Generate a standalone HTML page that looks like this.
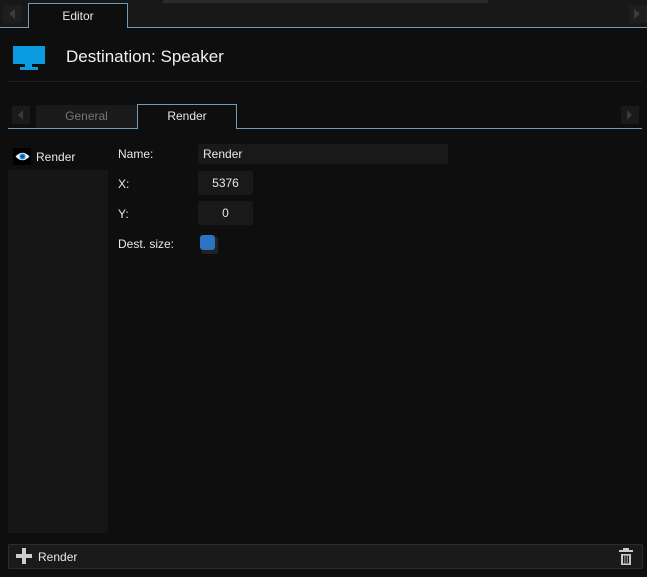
<!DOCTYPE html>
<html><head><style>
*{margin:0;padding:0;box-sizing:border-box}
body{width:647px;height:577px;background:#0e0e0e;font-family:"Liberation Sans",sans-serif;color:#e8e8e8;position:relative;overflow:hidden;font-size:12px}
.a{position:absolute}
</style></head><body>
<div class="a" style="left:0;top:0;width:647px;height:27px;background:#181818"></div>
<div class="a" style="left:163;top:0"></div>
<div class="a" style="left:163px;top:0;width:325px;height:3px;background:#2a2a2a"></div>
<div class="a" style="left:3px;top:5px;width:19px;height:18px;background:#1e1e1e"></div>
<div class="a" style="left:9px;top:9px;border-right:6px solid #3c3c3c;border-top:5px solid transparent;border-bottom:5px solid transparent"></div>
<div class="a" style="left:629px;top:5px;width:18px;height:18px;background:#1e1e1e"></div>
<div class="a" style="left:634px;top:9px;border-left:6px solid #3c3c3c;border-top:5px solid transparent;border-bottom:5px solid transparent"></div>
<div class="a" style="left:0;top:27px;width:647px;height:1px;background:#6f9cbb"></div>
<div class="a" style="left:28px;top:3px;width:100px;height:25px;background:#0e0e0e;border:1px solid #6f9cbb;border-bottom:none;text-align:center;line-height:24px;font-size:12px">Editor</div>
<svg class="a" style="left:12px;top:44px" width="34" height="27" viewBox="0 0 34 27"><rect x="1" y="2" width="32" height="18" fill="#0a9be0"/><rect x="13" y="20" width="7" height="3" fill="#0a9be0"/><rect x="8" y="23" width="18" height="3" fill="#0a9be0"/></svg>
<div class="a" style="left:66px;top:47px;font-size:17px;color:#f0f0f0">Destination: Speaker</div>
<div class="a" style="left:8px;top:81px;width:634px;height:1px;background:#1e1e1e"></div>
<div class="a" style="left:12px;top:106px;width:18px;height:18px;background:#1a1a1a"></div>
<div class="a" style="left:18px;top:110px;border-right:5px solid #3a3a3a;border-top:5px solid transparent;border-bottom:5px solid transparent"></div>
<div class="a" style="left:621px;top:106px;width:18px;height:18px;background:#1a1a1a"></div>
<div class="a" style="left:627px;top:110px;border-left:5px solid #3a3a3a;border-top:5px solid transparent;border-bottom:5px solid transparent"></div>
<div class="a" style="left:36px;top:105px;width:101px;height:23px;background:#1a1a1a;color:#777;text-align:center;line-height:23px">General</div>
<div class="a" style="left:8px;top:128px;width:634px;height:1px;background:#6f9cbb"></div>
<div class="a" style="left:137px;top:104px;width:100px;height:25px;background:#0e0e0e;border:1px solid #6f9cbb;border-bottom:none;text-align:center;line-height:23px">Render</div>
<div class="a" style="left:8px;top:170px;width:100px;height:363px;background:#161616"></div>
<div class="a" style="left:13px;top:148px;width:18px;height:17px;background:#000"></div>
<svg class="a" style="left:15px;top:151px" width="15" height="11" viewBox="0 0 15 11"><path d="M0.5 5.5Q7.5 -2 14.5 5.5Q7.5 13 0.5 5.5Z" fill="#e8f4ff"/><circle cx="7.5" cy="5.5" r="3" fill="#1a8fe0"/><circle cx="7.5" cy="5.5" r="1.2" fill="#0a3d66"/></svg>
<div class="a" style="left:36px;top:150px">Render</div>
<div class="a" style="left:118px;top:147px">Name:</div>
<div class="a" style="left:198px;top:144px;width:250px;height:20px;background:#191919;border-radius:2px;padding-left:5px;line-height:20px">Render</div>
<div class="a" style="left:118px;top:177px">X:</div>
<div class="a" style="left:198px;top:171px;width:55px;height:24px;background:#191919;border-radius:2px;text-align:center;line-height:24px">5376</div>
<div class="a" style="left:118px;top:207px">Y:</div>
<div class="a" style="left:198px;top:201px;width:55px;height:24px;background:#191919;border-radius:2px;text-align:center;line-height:24px">0</div>
<div class="a" style="left:118px;top:237px">Dest. size:</div>
<div class="a" style="left:202px;top:237px;width:16px;height:17px;background:#222"></div>
<div class="a" style="left:200px;top:235px;width:15px;height:15px;background:#2b74c4;border-radius:3px"></div>
<div class="a" style="left:8px;top:544px;width:635px;height:25px;background:#1a1a1a;border:1px solid #2c2c2c;border-radius:2px"></div>
<div class="a" style="left:16px;top:554px;width:16px;height:4px;background:#ccc"></div>
<div class="a" style="left:22px;top:548px;width:4px;height:16px;background:#ccc"></div>
<div class="a" style="left:38px;top:550px">Render</div>
<svg class="a" style="left:618px;top:548px" width="16" height="18" viewBox="0 0 16 18"><rect x="1" y="2" width="14" height="2" fill="#ccc"/><rect x="5" y="0" width="6" height="2" fill="#ccc"/><path d="M3 6h10v11h-10z M5 7.5v8h1.5v-8z M7.3 7.5v8h1.5v-8z M9.6 7.5v8h1.5v-8z" fill="#ccc" fill-rule="evenodd"/></svg>
</body></html>
